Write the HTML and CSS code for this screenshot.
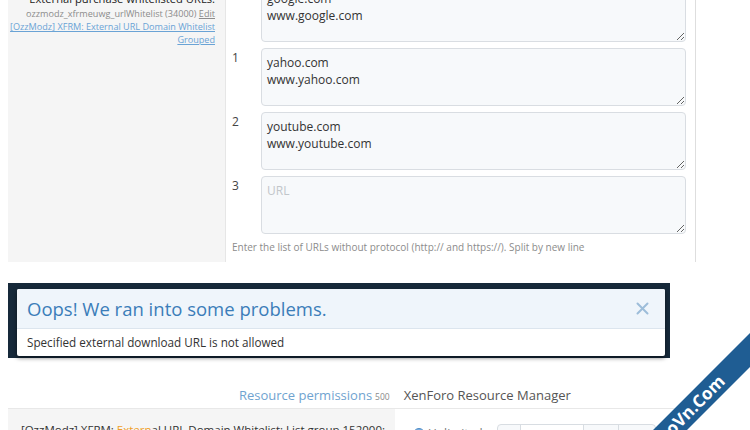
FILE: index.html
```html
<!DOCTYPE html>
<html>
<head>
<meta charset="utf-8">
<link rel="stylesheet" href="styles.css">
</head>
<body>
<div class="form-row top">
  <div class="dt">
    <div class="dt-title">External purchase whitelisted URLs:</div>
    <div class="dt-hint">ozzmodz_xfrmeuwg_urlWhitelist (34000) <a class="edit">Edit</a></div>
    <div class="dt-hint"><a class="addon">[OzzModz] XFRM: External URL Domain Whitelist<br>Grouped</a></div>
  </div>
  <div class="dd">
    <div class="list">
      <div class="item"><span class="num">0</span><textarea class="ta" readonly>google.com
www.google.com</textarea></div>
      <div class="item"><span class="num">1</span><textarea class="ta" readonly>yahoo.com
www.yahoo.com</textarea></div>
      <div class="item"><span class="num">2</span><textarea class="ta" readonly>youtube.com
www.youtube.com</textarea></div>
      <div class="item"><span class="num">3</span><textarea class="ta" readonly placeholder="URL"></textarea></div>
    </div>
    <div class="explain">Enter the list of URLs without protocol (http:// and https://). Split by new line</div>
  </div>
</div>

<div class="overlay-wrap">
  <div class="overlay">
    <div class="overlay-head">
      <span class="overlay-title">Oops! We ran into some problems.</span>
      <svg class="close" width="13" height="13" viewBox="0 0 13 13"><path d="M1.5 1.5 L11.5 11.5 M11.5 1.5 L1.5 11.5" stroke="#9dbdd9" stroke-width="2" stroke-linecap="round"/></svg>
    </div>
    <div class="overlay-body">Specified external download URL is not allowed</div>
  </div>
</div>

<div class="perm">
  <div class="perm-head">
    <a class="perm-link">Resource permissions</a><span class="perm-count">500</span>
    <span class="perm-title">XenForo Resource Manager</span>
  </div>
  <div class="perm-row">
    <div class="perm-dt">[OzzModz] XFRM: <span class="hl">Extern</span>al URL Domain Whitelist: List group 152000:</div>
    <div class="perm-dd">
      <span class="radio"></span><span class="radio-label">Unlimited</span>
      <div class="numbox">
        <span class="nb-icon"><span class="nb-dot"></span></span>
        <span class="nb-input"></span>
        <span class="nb-btn"></span>
        <span class="nb-btn"></span>
      </div>
    </div>
  </div>
</div>

<div class="wm">oVn.Com</div>
</body>
</html>
```
FILE: styles.css
```css
* { box-sizing: border-box; }
html, body { margin: 0; padding: 0; background: #fff; overflow: hidden; }
body {
  width: 750px;
  height: 430px;
  font-family: "Open Sans", "Noto Sans", sans-serif;
  color: #333;
}

/* ---------- top form row ---------- */
.top {
  display: flex;
  margin: -24px 0 0 8px;
  width: 688px;
}
.dt {
  width: 217px;
  flex: none;
  background: #f5f5f5;
  padding: 15px 10px 0 0;
  text-align: right;
  white-space: nowrap;
}
.dt-title { font-size: 11.2px; line-height: 16px; color: #222; }
.dt-hint { font-size: 9.1px; line-height: 13px; color: #8c8c8c; }
.edit { color: #8c8c8c; text-decoration: underline; }
.addon { color: #6aa3d5; text-decoration: underline; }

.dd {
  flex: 1;
  border-left: 1px solid #e6e6e6;
  border-right: 1px solid #dedede;
  padding: 8px 9px 8px 6px;
}
.list { display: flex; flex-direction: column; gap: 6px; }
.item { display: flex; align-items: flex-start; }
.num {
  width: 29px;
  flex: none;
  font-size: 12px;
  line-height: 16px;
  padding-top: 2px;
  color: #444;
}
.ta {
  flex: 1;
  height: 58px;
  margin: 0;
  background: #f7f9fb;
  border: 1px solid #d9dde2;
  border-radius: 4px;
  padding: 5px 5px;
  font-family: "Open Sans", "Noto Sans", sans-serif;
  font-size: 12px;
  line-height: 17px;
  color: #333;
  resize: vertical;
  outline: none;
}
.ta::placeholder { color: #c2c6ca; }
.explain {
  margin-top: 6px;
  font-size: 10px;
  line-height: 14px;
  color: #8c8c8c;
}

/* ---------- error overlay ---------- */
.overlay-wrap {
  margin: 21px 0 0 8px;
  width: 662px;
  background: #16293a;
  padding: 6px 5px 2px 9px;
}
.overlay {
  background: #fff;
  border-radius: 2px;
  box-shadow: 0 2px 4px rgba(0, 0, 0, 0.5);
  overflow: hidden;
}
.overlay-head {
  height: 40px;
  background: #eff5fb;
  border-bottom: 1px solid #dce5ee;
  display: flex;
  align-items: center;
  justify-content: space-between;
  padding: 0 16px 0 10px;
}
.overlay-title {
  font-size: 18.5px;
  color: #3b7db9;
  line-height: 24px;
}
.close { display: block; }
.overlay-body {
  height: 27px;
  line-height: 27px;
  padding: 0 10px;
  font-size: 11.7px;
  color: #333;
}

/* ---------- permissions ---------- */
.perm { margin: 27px 0 0 8px; width: 700px; }
.perm-head {
  display: flex;
  align-items: baseline;
  height: 23px;
  line-height: 20px;
  padding-left: 231px;
}
.perm-link { font-size: 13px; color: #6fa3d0; }
.perm-count { font-size: 8.5px; color: #8a8a8a; margin-left: 3px; }
.perm-title { font-size: 13px; color: #555; margin-left: 14px; }

.perm-row {
  display: flex;
  border-top: 1px solid #e8e8e8;
  height: 40px;
}
.perm-dt {
  width: 387px;
  flex: none;
  background: #f5f5f5;
  padding: 13px 10px 0 0;
  text-align: right;
  font-size: 11.5px;
  line-height: 16px;
  color: #333;
  white-space: nowrap;
  overflow: hidden;
}
.hl { color: #f0a02a; }
.perm-dd {
  flex: 1;
  display: flex;
  align-items: flex-start;
  padding-left: 18px;
}
.radio {
  width: 12px;
  height: 12px;
  margin-top: 19px;
  border-radius: 50%;
  border: 1px solid #4d8cc8;
  background: #7fb0de;
  flex: none;
}
.radio-label {
  margin: 16px 0 0 3px;
  font-size: 12px;
  color: #777;
  width: 69px;
}
.numbox {
  margin-top: 15px;
  width: 159px;
  height: 26px;
  display: flex;
  border: 1px solid #d8dde2;
  border-radius: 4px;
  background: #f7f9fb;
}
.nb-icon {
  width: 23px;
  border-right: 1px solid #d8dde2;
  display: flex;
  justify-content: center;
  padding-top: 6px;
}
.nb-dot {
  width: 8px;
  height: 8px;
  border-radius: 50%;
  border: 2px solid #333;
}
.nb-input { width: 64px; border-right: 1px solid #d8dde2; background: #fff; }
.nb-btn { width: 36px; border-right: 1px solid #d8dde2; }
.nb-btn:last-child { border-right: none; }

/* ---------- watermark ---------- */
.wm {
  position: absolute;
  left: 580px;
  top: 378px;
  width: 260px;
  height: 24px;
  background: #1f5d93;
  transform: rotate(-45deg);
  color: #fff;
  font-family: "Open Sans", sans-serif;
  font-weight: 700;
  font-size: 17px;
  line-height: 24px;
  padding-left: 71px;
  white-space: nowrap;
}
```
